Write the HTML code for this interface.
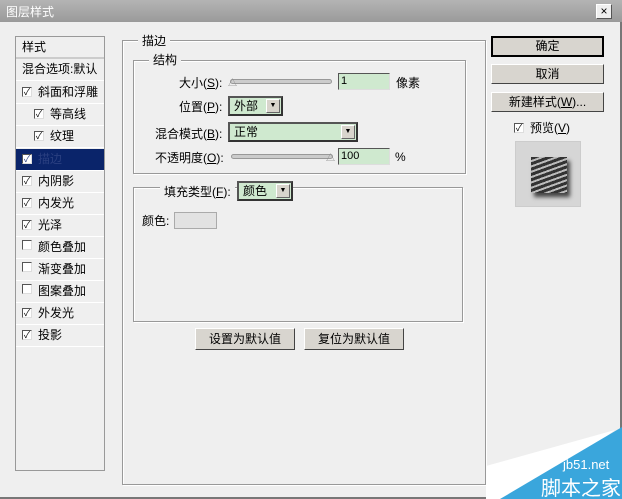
<!DOCTYPE html>
<html><head><meta charset="utf-8"><style>
*{margin:0;padding:0;box-sizing:border-box}
body{width:622px;height:499px;overflow:hidden;background:#efefef;font-family:"Liberation Sans","Noto Sans CJK SC",sans-serif;font-size:12px;color:#000;position:relative}
.a{position:absolute}
.title{left:0;top:0;width:622px;height:22px;background:linear-gradient(#b4b4b4,#9a9a9a);color:#fff;font-size:12px;padding:3px 6px}
.close{left:596px;top:4px;width:16px;height:15px;background:#efefef;border:1px solid;border-color:#fff #555 #555 #fff;font-size:12px;line-height:12px;text-align:center;color:#000}
.frame{left:0;top:22px;width:622px;height:477px;border-right:2px solid #777;border-bottom:2px solid #777}
.lp{left:15px;top:36px;width:90px;height:435px;border:1px solid #999;background:#efefef}
.li{position:absolute;left:0;width:88px;height:22px;border-bottom:1px solid #fff;line-height:21px;padding-left:6px;white-space:nowrap}
.cb{display:inline-block;width:10px;height:10px;border:1px solid #555;border-right-color:#ddd;border-bottom-color:#ddd;background:#fff;font-size:9px;line-height:8px;text-align:center;vertical-align:1px;margin-right:6px}
.grp{border:1px solid #999;box-shadow:1px 1px 0 #fff inset,1px 1px 0 #fff}
.lg{background:#efefef;padding:0 4px}
.inp{background:#cfe9cf;border:1px solid;border-color:#555 #ddd #ddd #555;height:17px;line-height:15px;padding-left:2px;font-size:11px}
.sel{background:#cfe9cf;border:2px solid;border-color:#555 #333 #333 #555;height:20px;line-height:16px;padding-left:4px}
.arr{position:absolute;right:1px;top:1px;width:14px;height:14px;background:#d8d4cc;border:1px solid;border-color:#fff #666 #666 #fff;font-size:7px;text-align:center;line-height:12px}
.btn{background:#d8d5cf;border:1px solid;border-color:#fff #444 #444 #fff;text-align:center;line-height:18px}
.sl{height:5px;background:#ccc;border:1px solid #999;border-radius:3px}
</style></head><body>
<div class="a title">图层样式</div>
<div class="a close">×</div>
<div class="a frame"></div>

<div class="a lp">
<div class="li" style="top:0;border-bottom:2px solid #ccc">样式</div>
<div class="li" style="top:22px">混合选项:默认</div>
<div class="li" style="top:45px"><span class="cb">✓</span>斜面和浮雕</div>
<div class="li" style="top:67px;padding-left:18px"><span class="cb">✓</span>等高线</div>
<div class="li" style="top:89px;padding-left:18px"><span class="cb">✓</span>纹理</div>
<div class="li" style="top:112px;background:#0a246a;color:#2a3f80"><span class="cb">✓</span>描边</div>
<div class="li" style="top:134px"><span class="cb">✓</span>内阴影</div>
<div class="li" style="top:156px"><span class="cb">✓</span>内发光</div>
<div class="li" style="top:178px"><span class="cb">✓</span>光泽</div>
<div class="li" style="top:200px"><span class="cb"></span>颜色叠加</div>
<div class="li" style="top:222px"><span class="cb"></span>渐变叠加</div>
<div class="li" style="top:244px"><span class="cb"></span>图案叠加</div>
<div class="li" style="top:266px"><span class="cb">✓</span>外发光</div>
<div class="li" style="top:288px"><span class="cb">✓</span>投影</div>
</div>

<div class="a grp" style="left:122px;top:40px;width:364px;height:445px"></div>
<div class="a lg" style="left:138px;top:32px">描边</div>
<div class="a grp" style="left:133px;top:60px;width:333px;height:114px"></div>
<div class="a lg" style="left:149px;top:51px">结构</div>

<div class="a" style="left:179px;top:74px">大小(<u>S</u>):</div>
<div class="a sl" style="left:230px;top:79px;width:102px"></div>
<div class="a" style="left:228px;top:76px;font-size:9px;color:#888">△</div>
<div class="a inp" style="left:338px;top:73px;width:52px">1</div>
<div class="a" style="left:396px;top:74px">像素</div>

<div class="a" style="left:179px;top:98px">位置(<u>P</u>):</div>
<div class="a sel" style="left:228px;top:96px;width:55px">外部<span class="arr">▼</span></div>

<div class="a" style="left:155px;top:125px">混合模式(<u>B</u>):</div>
<div class="a sel" style="left:228px;top:122px;width:130px">正常<span class="arr">▼</span></div>

<div class="a" style="left:155px;top:149px">不透明度(<u>O</u>):</div>
<div class="a sl" style="left:231px;top:154px;width:102px"></div>
<div class="a" style="left:326px;top:151px;font-size:9px;color:#888">△</div>
<div class="a inp" style="left:338px;top:148px;width:52px">100</div>
<div class="a" style="left:395px;top:150px">%</div>

<div class="a grp" style="left:133px;top:187px;width:330px;height:135px"></div>
<div class="a lg" style="left:160px;top:183px">填充类型(<u>F</u>):</div>
<div class="a sel" style="left:237px;top:181px;width:56px;background:#cfe9cf">颜色<span class="arr">▼</span></div>
<div class="a" style="left:142px;top:212px">颜色:</div>
<div class="a" style="left:174px;top:212px;width:43px;height:17px;background:#e2e2e2;border:1px solid #aaa"></div>

<div class="a btn" style="left:195px;top:328px;width:100px;height:22px;line-height:20px">设置为默认值</div>
<div class="a btn" style="left:304px;top:328px;width:100px;height:22px;line-height:20px">复位为默认值</div>

<div class="a btn" style="left:491px;top:36px;width:113px;height:21px;border:2px solid #000;line-height:16px">确定</div>
<div class="a btn" style="left:491px;top:64px;width:113px;height:20px">取消</div>
<div class="a btn" style="left:491px;top:92px;width:113px;height:20px">新建样式(<u>W</u>)...</div>
<div class="a" style="left:514px;top:119px"><span class="cb">✓</span>预览(<u>V</u>)</div>
<div class="a" style="left:515px;top:141px;width:66px;height:66px;background:#d6d6d6;border:1px solid #ccc"></div>
<div class="a" style="left:531px;top:157px;width:36px;height:36px;background:repeating-linear-gradient(160deg,#333 0 3px,#bbb 3px 5px);box-shadow:3px 4px 4px #444"></div>

<svg class="a" style="left:0;top:0" width="622" height="499">
<polygon points="486,466 615,430 520,499 486,499" fill="#fff"/>
<polygon points="622,427 622,499 500,499" fill="#3aa6dc"/>
<text x="563" y="469" font-family="Liberation Sans" font-size="13" fill="#fff">jb51.net</text>
<text x="541" y="495" font-family="Noto Sans CJK SC" font-size="20" fill="#fff">脚本之家</text>
</svg>
</body></html>
